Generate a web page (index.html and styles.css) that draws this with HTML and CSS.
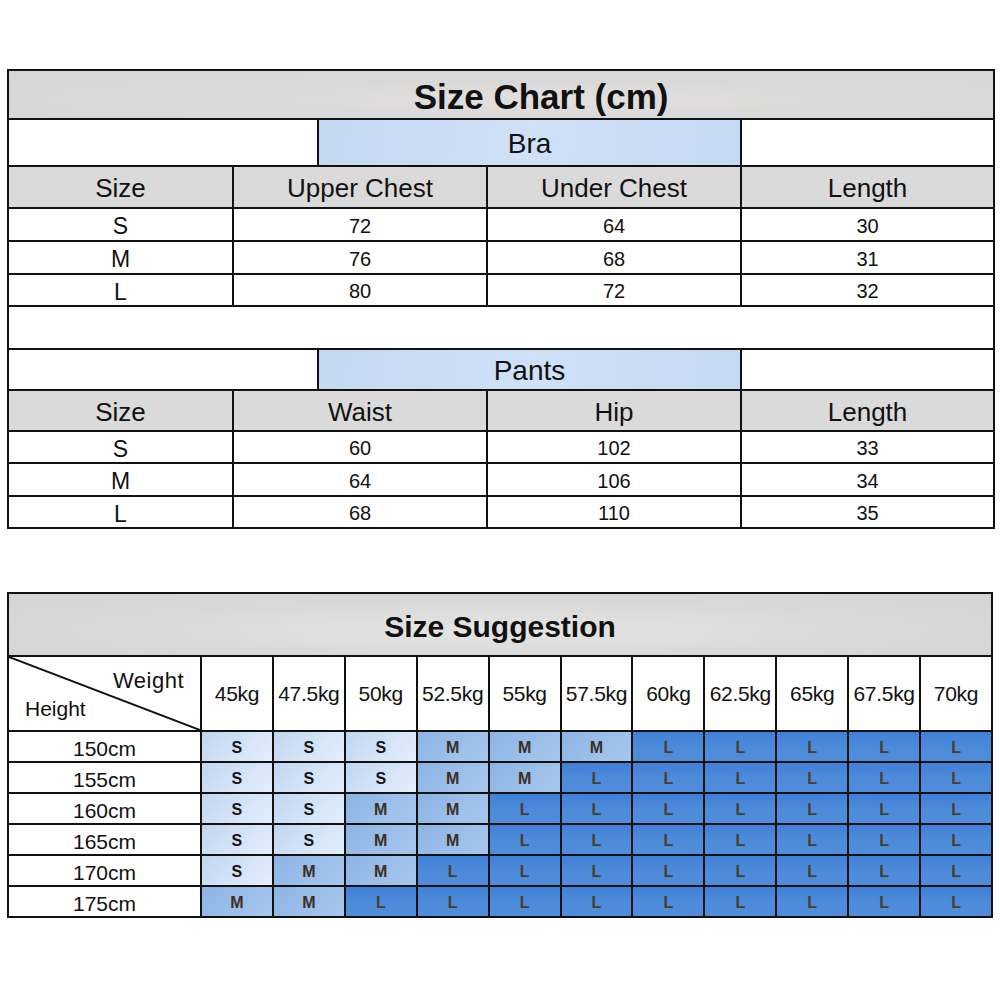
FILE: index.html
```html
<!DOCTYPE html>
<html>
<head>
<meta charset="utf-8">
<link rel="stylesheet" href="styles.css">
</head>
<body>
<div class="page">
  <table class="chart">
    <colgroup>
      <col class="c1"><col class="c2"><col class="c3"><col class="c4"><col class="c5">
    </colgroup>
    <tr class="r-title"><td colspan="5" class="title">Size Chart (cm)</td></tr>
    <tr class="r-sec"><td colspan="2"></td><td colspan="2" class="sec">Bra</td><td></td></tr>
    <tr class="r-head"><td class="head">Size</td><td colspan="2" class="head">Upper Chest</td><td class="head">Under Chest</td><td class="head">Length</td></tr>
    <tr class="r-d1"><td class="sz">S</td><td colspan="2">72</td><td>64</td><td>30</td></tr>
    <tr class="r-d1"><td class="sz">M</td><td colspan="2">76</td><td>68</td><td>31</td></tr>
    <tr class="r-d3"><td class="sz">L</td><td colspan="2">80</td><td>72</td><td>32</td></tr>
    <tr class="r-blank"><td colspan="5"></td></tr>
    <tr class="r-sec2"><td colspan="2"></td><td colspan="2" class="sec">Pants</td><td></td></tr>
    <tr class="r-head2"><td class="head">Size</td><td colspan="2" class="head">Waist</td><td class="head">Hip</td><td class="head">Length</td></tr>
    <tr class="r-d3"><td class="sz">S</td><td colspan="2">60</td><td>102</td><td>33</td></tr>
    <tr class="r-d1"><td class="sz">M</td><td colspan="2">64</td><td>106</td><td>34</td></tr>
    <tr class="r-d3"><td class="sz">L</td><td colspan="2">68</td><td>110</td><td>35</td></tr>
  </table>

  <table class="sugg">
    <colgroup>
      <col class="h0">
      <col><col><col><col><col><col><col><col><col><col><col>
    </colgroup>
    <tr class="s-title"><td colspan="12" class="stitle">Size Suggestion</td></tr>
    <tr class="s-head">
      <td class="corner">
        <svg class="diag" viewBox="0 0 100 100" preserveAspectRatio="none"><line x1="0" y1="0" x2="100" y2="100" stroke="#111" stroke-width="2" vector-effect="non-scaling-stroke"/></svg>
        <span class="lw">Weight</span>
        <span class="lh">Height</span>
      </td>
      <td class="kg">45kg</td><td class="kg">47.5kg</td><td class="kg">50kg</td><td class="kg">52.5kg</td><td class="kg">55kg</td><td class="kg">57.5kg</td><td class="kg">60kg</td><td class="kg">62.5kg</td><td class="kg">65kg</td><td class="kg">67.5kg</td><td class="kg">70kg</td>
    </tr>
    <tr class="s-row"><td class="ht">150cm</td><td class="s">S</td><td class="s">S</td><td class="s">S</td><td class="m">M</td><td class="m">M</td><td class="m">M</td><td class="l">L</td><td class="l">L</td><td class="l">L</td><td class="l">L</td><td class="l">L</td></tr>
    <tr class="s-row"><td class="ht">155cm</td><td class="s">S</td><td class="s">S</td><td class="s">S</td><td class="m">M</td><td class="m">M</td><td class="l">L</td><td class="l">L</td><td class="l">L</td><td class="l">L</td><td class="l">L</td><td class="l">L</td></tr>
    <tr class="s-row"><td class="ht">160cm</td><td class="s">S</td><td class="s">S</td><td class="m">M</td><td class="m">M</td><td class="l">L</td><td class="l">L</td><td class="l">L</td><td class="l">L</td><td class="l">L</td><td class="l">L</td><td class="l">L</td></tr>
    <tr class="s-row"><td class="ht">165cm</td><td class="s">S</td><td class="s">S</td><td class="m">M</td><td class="m">M</td><td class="l">L</td><td class="l">L</td><td class="l">L</td><td class="l">L</td><td class="l">L</td><td class="l">L</td><td class="l">L</td></tr>
    <tr class="s-row"><td class="ht">170cm</td><td class="s">S</td><td class="m">M</td><td class="m">M</td><td class="l">L</td><td class="l">L</td><td class="l">L</td><td class="l">L</td><td class="l">L</td><td class="l">L</td><td class="l">L</td><td class="l">L</td></tr>
    <tr class="s-row"><td class="ht">175cm</td><td class="m">M</td><td class="m">M</td><td class="l">L</td><td class="l">L</td><td class="l">L</td><td class="l">L</td><td class="l">L</td><td class="l">L</td><td class="l">L</td><td class="l">L</td><td class="l">L</td></tr>
  </table>
</div>
</body>
</html>
```

FILE: styles.css
```css
html, body {
  margin: 0;
  padding: 0;
  background: #ffffff;
}
.page {
  padding: 69px 0 0 7px;
  font-family: "Liberation Sans", Arial, sans-serif;
  color: #111;
}
table {
  border-collapse: collapse;
  table-layout: fixed;
}
td {
  border: 2px solid #111;
  padding: 0;
  text-align: center;
  vertical-align: middle;
  overflow: hidden;
  white-space: nowrap;
}

/* ---------- Size chart ---------- */
.chart {
  width: 986px;
}
.chart .c1 { width: 225px; }
.chart .c2 { width: 85px; }
.chart .c3 { width: 169px; }
.chart .c4 { width: 254px; }
.chart .c5 { width: 253px; }

.chart td { font-size: 20px; line-height: 1; padding-top: 2px; }
.chart tr.r-title td { height: 43px; }
.chart tr.r-sec td { height: 43px; }
.chart tr.r-head td { height: 38px; }
.chart tr.r-d1 td { height: 27px; }
.chart tr.r-d3 td { height: 26px; }
.chart tr.r-blank td { height: 39px; }
.chart tr.r-sec2 td { height: 37px; }
.chart tr.r-head2 td { height: 37px; }

.chart td.title {
  background: radial-gradient(ellipse at 55% 60%, #e3e0dc 0%, #d9d9d9 45%, #d6d6d6 100%);
  font-size: 35px;
  font-weight: bold;
  padding: 4px 0 0 80px;
}
.chart td.sec {
  background: linear-gradient(100deg, #c3d8f2 0%, #cfe1f7 50%, #c4d9f3 100%);
  font-size: 28px;
}
.chart td.head {
  background: #dadada;
  font-size: 26px;
}
.chart td.sz {
  font-size: 23px;
  padding-top: 4px;
}

/* ---------- Size suggestion ---------- */
.sugg {
  margin-top: 63px;
  width: 986px;
}
.sugg .h0 { width: 193px; }
.sugg td { line-height: 1; }
.sugg tr.s-title td { height: 57px; }
.stitle {
  background: radial-gradient(ellipse at 50% 60%, #e4e4e4 0%, #d8d8d8 60%, #d4d4d4 100%);
  font-size: 30px;
  font-weight: bold;
  padding-top: 4px !important;
}
.sugg tr.s-head td { height: 73px; }
.kg {
  font-size: 21px;
  letter-spacing: -0.3px;
}
.corner {
  position: relative;
  text-align: left;
}
.diag {
  position: absolute;
  left: 0;
  top: 0;
  width: 100%;
  height: 100%;
}
.lw {
  position: absolute;
  right: 16px;
  top: 13px;
  font-size: 22px;
  letter-spacing: 0.5px;
}
.lh {
  position: absolute;
  left: 16px;
  top: 41px;
  font-size: 21px;
}
.sugg tr.s-row td { height: 27px; padding-top: 2px; }
.sugg tr.s-row td.ht {
  font-size: 21px;
  padding-top: 4px;
  height: 25px;
}
.s, .m, .l {
  font-size: 16px;
  font-weight: bold;
}
.s {
  background: linear-gradient(135deg, #c0d6f1 0%, #d6e5f8 60%, #e3eefb 100%);
  color: #151515;
}
.m {
  background: linear-gradient(135deg, #8cb3e4 0%, #9dc0ea 60%, #a6c6ec 100%);
  color: #3a2f22;
}
.l {
  background: linear-gradient(180deg, #3f80d8 0%, #4d8ad9 50%, #4f8cda 100%);
  color: #4a3d2c;
}
```
